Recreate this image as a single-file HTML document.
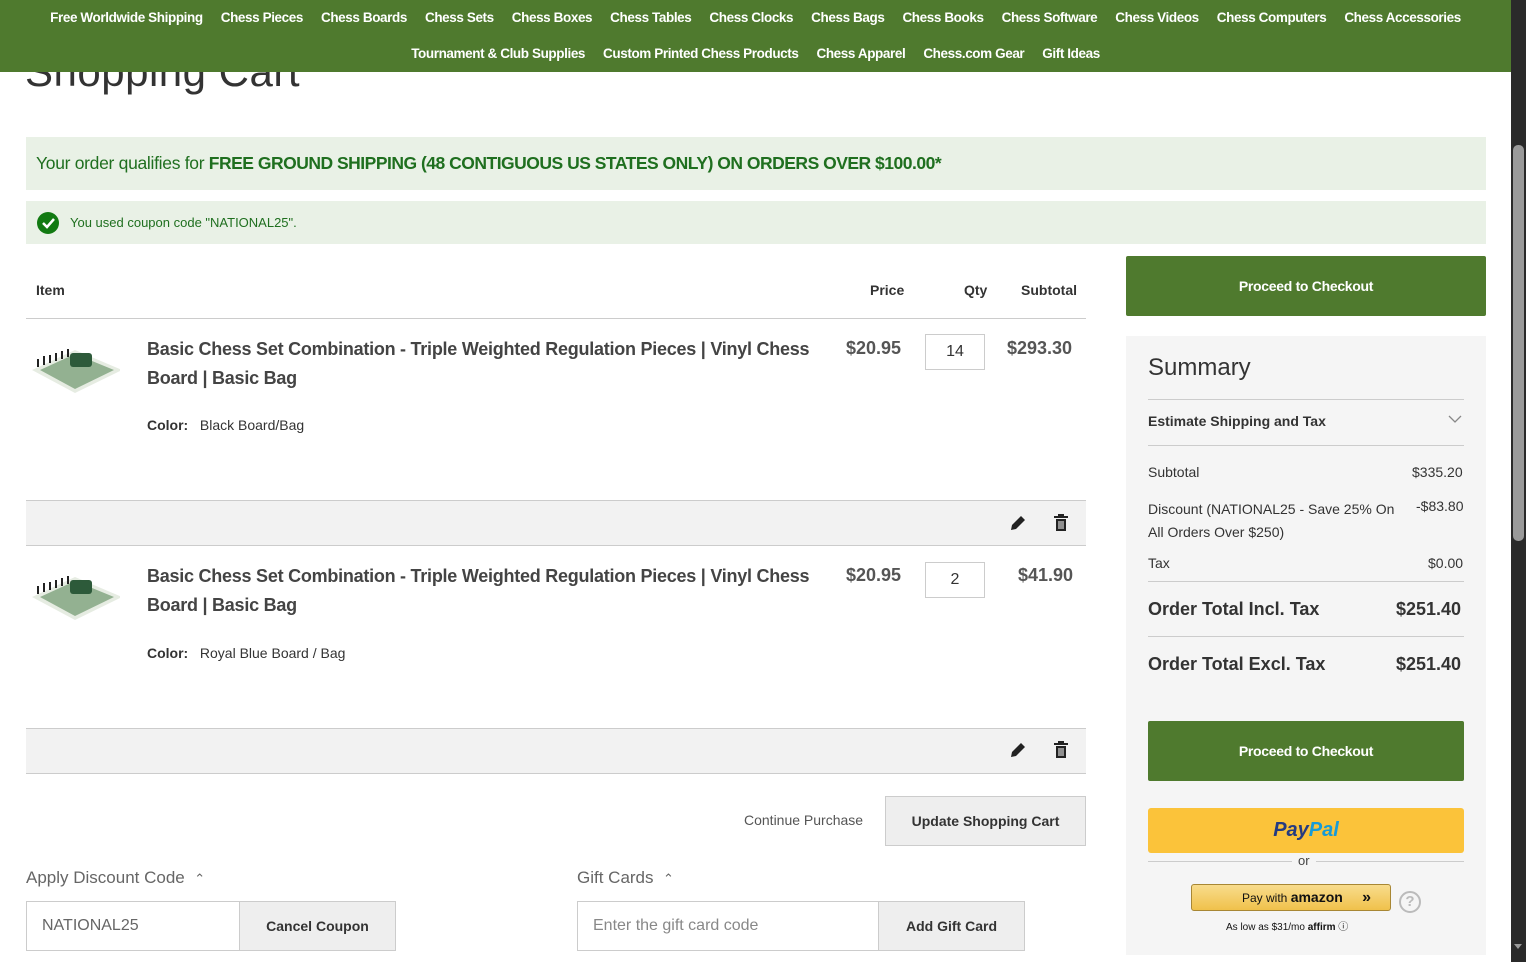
<!DOCTYPE html>
<html><head><meta charset="utf-8"><style>
*{box-sizing:border-box;margin:0;padding:0}
body{width:1526px;height:962px;overflow:hidden;background:#fff;font-family:"Liberation Sans",sans-serif;color:#333;position:relative}
.a{position:absolute}
.nav{left:0;top:0;width:1511px;height:72px;background:#4f7a2e;color:#fff;font-weight:bold;font-size:13.5px;letter-spacing:-0.4px}
.nav div{position:absolute;width:100%;text-align:center;white-space:nowrap}
.nav span{margin:0 9px}
.green{background:#4f7a2e;color:#fff;font-weight:bold;font-size:14px;text-align:center;border-radius:2px;letter-spacing:-0.3px}
.t{font-weight:bold;font-size:18px;color:#444;line-height:29px;letter-spacing:-0.25px}
.b14{font-weight:bold;font-size:14px;color:#333}
.gray{background:#f2f2f2;border-top:1px solid #ccc;border-bottom:1px solid #ccc}
.qty{width:60px;height:36px;border:1px solid #ccc;background:#fff;text-align:center;line-height:34px;font-size:16px}
.price{font-size:18px;font-weight:bold;color:#555}
.sr{font-size:14px;color:#333}
.btn{background:#eee;border:1px solid #ccc;font-weight:bold;font-size:14px;color:#333;text-align:center}
.board{width:90px;height:50px}
</style></head><body>
<div class="a" style="left:25px;top:48px;font-size:42px;color:#333;letter-spacing:0.5px">Shopping Cart</div>
<div class="a nav">
<div style="top:10px">
<span>Free Worldwide Shipping</span><span>Chess Pieces</span><span>Chess Boards</span><span>Chess Sets</span><span>Chess Boxes</span><span>Chess Tables</span><span>Chess Clocks</span><span>Chess Bags</span><span>Chess Books</span><span>Chess Software</span><span>Chess Videos</span><span>Chess Computers</span><span>Chess Accessories</span></div>
<div style="top:46px"><span>Tournament &amp; Club Supplies</span><span>Custom Printed Chess Products</span><span>Chess Apparel</span><span>Chess.com Gear</span><span>Gift Ideas</span></div>
</div>
<div class="a" style="left:1511px;top:0;width:15px;height:962px;background:#2a2a2a"></div>
<div class="a" style="left:1513px;top:145px;width:11px;height:396px;background:#9a9a9a;border-radius:5px"></div>
<div class="a" style="left:1514px;top:944px;width:0;height:0;border-left:4px solid transparent;border-right:4px solid transparent;border-top:5px solid #999"></div>

<div class="a" style="left:26px;top:137px;width:1460px;height:53px;background:#e9f1e6;font-size:17.5px;color:#1f6f1f;line-height:53px;padding-left:10px;letter-spacing:-0.3px;white-space:nowrap">Your order qualifies for <b style="letter-spacing:-0.5px">FREE GROUND SHIPPING (48 CONTIGUOUS US STATES ONLY) ON ORDERS OVER $100.00*</b></div>
<div class="a" style="left:26px;top:201px;width:1460px;height:43px;background:#e9f1e6;font-size:13px;color:#1f6f1f;line-height:43px;padding-left:44px">You used coupon code "NATIONAL25".</div>
<svg class="a" style="left:37px;top:212px" width="22" height="22"><circle cx="11" cy="11" r="11" fill="#127a12"/><path d="M6 11l4 4 7-8" stroke="#fff" stroke-width="2.5" fill="none"/></svg>

<div class="a b14" style="left:36px;top:282px">Item</div>
<div class="a b14" style="left:870px;top:282px">Price</div>
<div class="a b14" style="left:964px;top:282px">Qty</div>
<div class="a b14" style="left:1021px;top:282px">Subtotal</div>
<div class="a" style="left:26px;top:318px;width:1060px;height:1px;background:#ccc"></div>

<svg class="a board" style="left:30px;top:345px" viewBox="0 0 90 50"><polygon points="2,25 45,5 92,25 45,48" fill="#e6ece2"/><polygon points="10,25 45,9 84,25 45,44" fill="#5b8a5b" opacity=".6"/><rect x="40" y="8" width="22" height="14" rx="3" fill="#2d5a3a"/><g stroke="#222" stroke-width="2"><path d="M8 22v-8M14 20v-9M20 18v-8M26 16v-8M32 14v-8M38 12v-8"/></g></svg>
<div class="a t" style="left:147px;top:335px;width:700px">Basic Chess Set Combination - Triple Weighted Regulation Pieces | Vinyl Chess Board | Basic Bag</div>
<div class="a" style="left:147px;top:417px;font-size:14px"><b>Color:</b>&nbsp;&nbsp; Black Board/Bag</div>
<div class="a price" style="left:846px;top:338px">$20.95</div>
<div class="a qty" style="left:925px;top:334px">14</div>
<div class="a price" style="left:1007px;top:338px">$293.30</div>
<div class="a gray" style="left:26px;top:500px;width:1060px;height:46px"></div>

<svg class="a board" style="left:30px;top:572px" viewBox="0 0 90 50"><polygon points="2,25 45,5 92,25 45,48" fill="#e6ece2"/><polygon points="10,25 45,9 84,25 45,44" fill="#5b8a5b" opacity=".6"/><rect x="40" y="8" width="22" height="14" rx="3" fill="#2d5a3a"/><g stroke="#222" stroke-width="2"><path d="M8 22v-8M14 20v-9M20 18v-8M26 16v-8M32 14v-8M38 12v-8"/></g></svg>
<div class="a t" style="left:147px;top:562px;width:700px">Basic Chess Set Combination - Triple Weighted Regulation Pieces | Vinyl Chess Board | Basic Bag</div>
<div class="a" style="left:147px;top:645px;font-size:14px"><b>Color:</b>&nbsp;&nbsp; Royal Blue Board / Bag</div>
<div class="a price" style="left:846px;top:565px">$20.95</div>
<div class="a qty" style="left:925px;top:562px">2</div>
<div class="a price" style="left:1018px;top:565px">$41.90</div>
<div class="a gray" style="left:26px;top:728px;width:1060px;height:46px"></div>

<svg class="a" style="left:1009px;top:514px" width="18" height="18"><path d="M2 16l1-5 9-9 4 4-9 9z" fill="#222"/></svg>
<svg class="a" style="left:1053px;top:514px" width="16" height="18"><rect x="1" y="2" width="14" height="2" fill="#222"/><rect x="5" y="0" width="6" height="2" fill="#222"/><path d="M3 5h10v12H3z" fill="#222"/><path d="M6 7v8M8 7v8M10 7v8" stroke="#fff"/></svg>
<svg class="a" style="left:1009px;top:741px" width="18" height="18"><path d="M2 16l1-5 9-9 4 4-9 9z" fill="#222"/></svg>
<svg class="a" style="left:1053px;top:741px" width="16" height="18"><rect x="1" y="2" width="14" height="2" fill="#222"/><rect x="5" y="0" width="6" height="2" fill="#222"/><path d="M3 5h10v12H3z" fill="#222"/><path d="M6 7v8M8 7v8M10 7v8" stroke="#fff"/></svg>

<div class="a" style="left:744px;top:812px;font-size:14px;color:#555">Continue Purchase</div>
<div class="a btn" style="left:885px;top:796px;width:201px;height:50px;line-height:48px">Update Shopping Cart</div>

<div class="a" style="left:26px;top:868px;font-size:17px;color:#666">Apply Discount Code &nbsp;<span style="font-size:13px">&#8963;</span></div>
<div class="a" style="left:26px;top:901px;width:214px;height:50px;border:1px solid #ccc;font-size:16px;color:#666;line-height:48px;padding-left:15px">NATIONAL25</div>
<div class="a btn" style="left:239px;top:901px;width:157px;height:50px;line-height:48px">Cancel Coupon</div>
<div class="a" style="left:577px;top:868px;font-size:17px;color:#666">Gift Cards &nbsp;<span style="font-size:13px">&#8963;</span></div>
<div class="a" style="left:577px;top:901px;width:302px;height:50px;border:1px solid #ccc;font-size:16px;color:#888;line-height:48px;padding-left:15px">Enter the gift card code</div>
<div class="a btn" style="left:878px;top:901px;width:147px;height:50px;line-height:48px">Add Gift Card</div>

<div class="a green" style="left:1126px;top:256px;width:360px;height:60px;line-height:60px">Proceed to Checkout</div>
<div class="a" style="left:1126px;top:336px;width:360px;height:619px;background:#f5f5f5"></div>
<div class="a" style="left:1148px;top:354px;font-size:24px;color:#333">Summary</div>
<div class="a" style="left:1148px;top:399px;width:316px;height:1px;background:#ccc"></div>
<div class="a" style="left:1148px;top:413px;font-size:14px;font-weight:bold;color:#333">Estimate Shipping and Tax</div>
<svg class="a" style="left:1448px;top:414px" width="14" height="10"><path d="M1 2l6 6 6-6" stroke="#888" fill="none" stroke-width="1.3"/></svg>
<div class="a" style="left:1148px;top:445px;width:316px;height:1px;background:#ccc"></div>
<div class="a sr" style="left:1148px;top:464px">Subtotal</div><div class="a sr" style="left:1412px;top:464px">$335.20</div>
<div class="a sr" style="left:1148px;top:498px;width:250px;line-height:23px">Discount (NATIONAL25 - Save 25% On All Orders Over $250)</div><div class="a sr" style="left:1416px;top:498px">-$83.80</div>
<div class="a sr" style="left:1148px;top:555px">Tax</div><div class="a sr" style="left:1428px;top:555px">$0.00</div>
<div class="a" style="left:1148px;top:581px;width:316px;height:1px;background:#ccc"></div>
<div class="a" style="left:1148px;top:599px;font-size:18px;font-weight:bold">Order Total Incl. Tax</div><div class="a" style="left:1396px;top:599px;font-size:18px;font-weight:bold">$251.40</div>
<div class="a" style="left:1148px;top:636px;width:316px;height:1px;background:#ccc"></div>
<div class="a" style="left:1148px;top:654px;font-size:18px;font-weight:bold">Order Total Excl. Tax</div><div class="a" style="left:1396px;top:654px;font-size:18px;font-weight:bold">$251.40</div>
<div class="a green" style="left:1148px;top:721px;width:316px;height:60px;line-height:60px">Proceed to Checkout</div>
<div class="a" style="left:1148px;top:808px;width:316px;height:45px;background:#fbc33a;border-radius:3px;text-align:center;line-height:45px;font-size:20px;font-weight:bold;font-style:italic"><span style="color:#253b80">Pay</span><span style="color:#179bd7">Pal</span></div>
<div class="a" style="left:1148px;top:861px;width:316px;height:1px;background:#ccc"></div>
<div class="a" style="left:1292px;top:853px;background:#f5f5f5;padding:0 6px;font-size:13px;color:#444">or</div>
<div class="a" style="left:1191px;top:884px;width:200px;height:27px;background:linear-gradient(#f8dc8c,#f0c14b);border:1px solid #a88734;border-radius:3px;font-size:12px;line-height:25px;padding-left:50px;color:#111">Pay with <b style="font-size:14px">amazon</b> <b style="margin-left:16px;font-size:16px">&raquo;</b></div>
<div class="a" style="left:1399px;top:891px;width:22px;height:22px;border:2px solid #bbb;border-radius:50%;color:#bbb;font-size:15px;text-align:center;line-height:18px;font-weight:bold">?</div>
<div class="a" style="left:1226px;top:918px;font-size:10px;color:#111">As low as $31/mo <b>affirm</b> &#9432;</div>
</body></html>
